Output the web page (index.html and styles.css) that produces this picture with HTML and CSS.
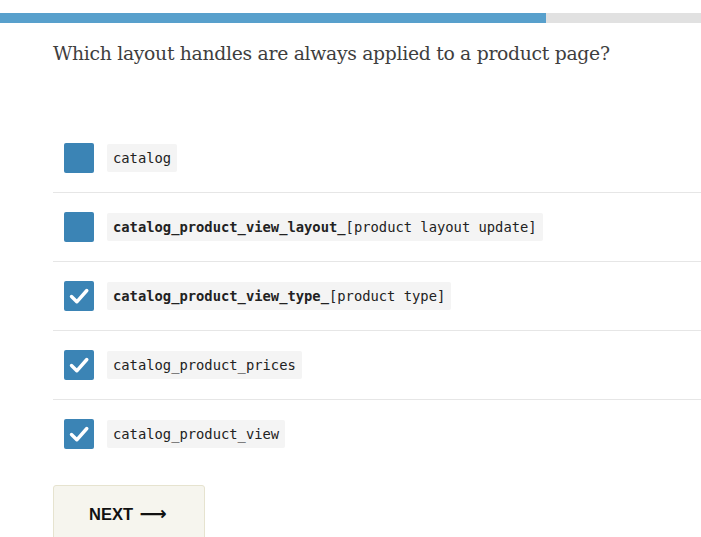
FILE: index.html
```html
<!DOCTYPE html>
<html>
<head>
<meta charset="utf-8">
<link rel="stylesheet" href="styles.css">
</head>
<body>
<div class="progress"><div class="progress-fill" style="width:77.9%"></div></div>
<main class="quiz">
  <h1 class="question">Which layout handles are always applied to a product page?</h1>
  <ul class="options">
    <li class="option"><span class="box"></span><code class="chip">catalog</code></li>
    <li class="option"><span class="box"></span><code class="chip"><b>catalog_product_view_layout_</b>[product layout update]</code></li>
    <li class="option"><span class="box checked"><svg viewBox="0 0 30 30" width="30" height="30"><path d="M7.5 15.5 L12.8 20.8 L22.8 9.5" fill="none" stroke="#fff" stroke-width="3.4" stroke-linecap="round" stroke-linejoin="round"/></svg></span><code class="chip"><b>catalog_product_view_type_</b>[product type]</code></li>
    <li class="option"><span class="box checked"><svg viewBox="0 0 30 30" width="30" height="30"><path d="M7.5 15.5 L12.8 20.8 L22.8 9.5" fill="none" stroke="#fff" stroke-width="3.4" stroke-linecap="round" stroke-linejoin="round"/></svg></span><code class="chip">catalog_product_prices</code></li>
    <li class="option"><span class="box checked"><svg viewBox="0 0 30 30" width="30" height="30"><path d="M7.5 15.5 L12.8 20.8 L22.8 9.5" fill="none" stroke="#fff" stroke-width="3.4" stroke-linecap="round" stroke-linejoin="round"/></svg></span><code class="chip">catalog_product_view</code></li>
  </ul>
  <button class="next">NEXT <span class="arrow">⟶</span></button>
</main>
</body>
</html>
```
FILE: styles.css
```css
html, body {
  margin: 0;
  padding: 0;
  background: #fff;
}
body {
  padding-top: 13px;
  overflow: hidden;
}
.progress {
  height: 10px;
  background: #e1e1e1;
}
.progress-fill {
  height: 100%;
  background: #58a0cc;
}
.quiz {
  padding-left: 53px;
}
.question {
  margin: 0;
  padding-top: 17px;
  font-family: "DejaVu Serif", Georgia, serif;
  font-weight: normal;
  font-size: 18.8px;
  line-height: 28px;
  color: #3e3e3e;
  letter-spacing: -0.3px;
}
.options {
  list-style: none;
  margin: 56px 0 0 0;
  padding: 0;
}
.option {
  display: flex;
  align-items: center;
  gap: 13px;
  padding: 19px 0 19px 11px;
  border-bottom: 1px solid #e6e6e6;
}
.option:last-child {
  border-bottom: none;
}
.box {
  width: 30px;
  height: 30px;
  flex: none;
  background: #3b84b5;
  border-radius: 2px;
  display: flex;
}
.chip {
  font-family: "DejaVu Sans Mono", Consolas, monospace;
  font-size: 13.8px;
  line-height: 28px;
  padding: 0 6px;
  background: #f4f4f4;
  border-radius: 2px;
  color: #222;
}
.chip b {
  font-weight: bold;
}
.next {
  margin-top: 17px;
  width: 152px;
  height: 60px;
  background: #f6f5ee;
  border: 1px solid #e6e3cf;
  border-radius: 3px;
  font-family: "Liberation Sans", Arial, sans-serif;
  font-weight: bold;
  font-size: 16.5px;
  color: #111;
  text-align: left;
  padding: 0 0 4px 35px;
}
.arrow {
  font-family: "DejaVu Sans", sans-serif;
  font-weight: bold;
  font-size: 19px;
  margin-left: 2px;
}
```
